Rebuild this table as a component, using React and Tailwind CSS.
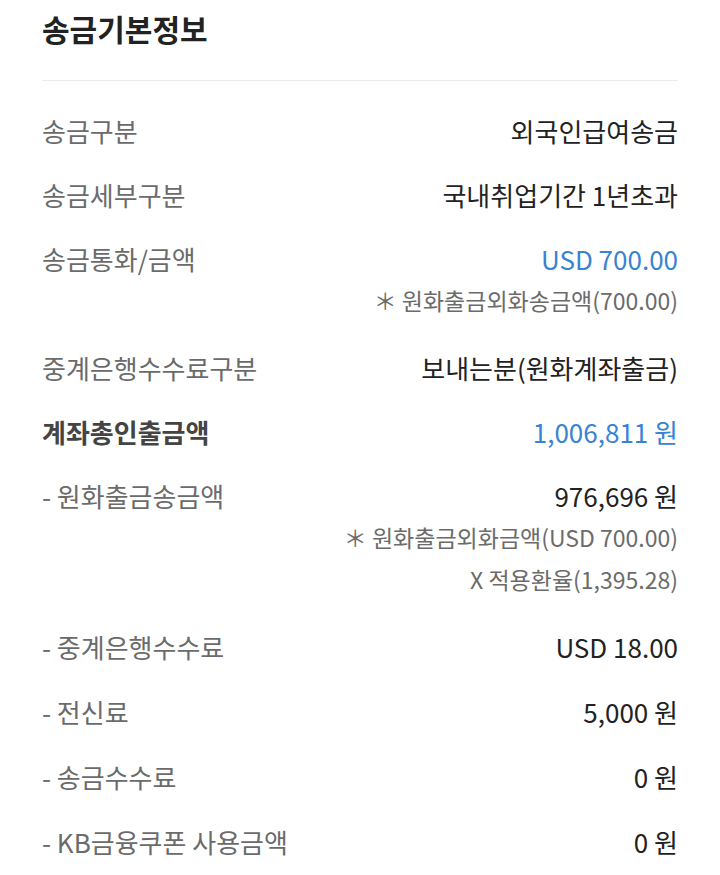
import React from 'react';

const rows = [
  { label: '송금구분', value: '외국인급여송금' },
  { label: '송금세부구분', value: '국내취업기간 1년초과' },
  {
    label: '송금통화/금액',
    value: 'USD 700.00',
    blue: true,
    notes: ['＊ 원화출금외화송금액(700.00)'],
  },
  { label: '중계은행수수료구분', value: '보내는분(원화계좌출금)' },
  { label: '계좌총인출금액', value: '1,006,811 원', blue: true, strong: true },
  {
    label: '- 원화출금송금액',
    value: '976,696 원',
    notes: ['＊ 원화출금외화금액(USD 700.00)', 'X 적용환율(1,395.28)'],
  },
  { label: '- 중계은행수수료', value: 'USD 18.00' },
  { label: '- 전신료', value: '5,000 원', loose: true },
  { label: '- 송금수수료', value: '0 원', loose: true },
  { label: '- KB금융쿠폰 사용금액', value: '0 원', loose: true },
];

function InfoRow({ row }) {
  const pad = row.notes ? 'pt-4 pb-[15px]' : row.loose ? 'pt-[17px] pb-4' : 'py-4';
  return (
    <div className={pad}>
      <div className="flex justify-between items-center leading-[32px] text-[26px]">
        <span className={row.strong ? 'font-bold text-[#444]' : 'text-[#6b6b6b]'}>{row.label}</span>
        <span className={row.blue ? 'text-[#3a82d2]' : 'text-[#222]'}>{row.value}</span>
      </div>
      {row.notes && (
        <div className="mt-[4px] flex flex-col items-end text-[23px] leading-[42px] text-[#6b6b6b]">
          {row.notes.map((n, idx) => (
            <span key={idx}>{n}</span>
          ))}
        </div>
      )}
    </div>
  );
}

export default function App() {
  return (
    <div
      className="w-[720px] min-h-[875px] bg-white px-[42px]"
      style={{ fontFamily: '"Noto Sans CJK KR", "Noto Sans", sans-serif' }}
    >
      <div className="pt-2 pb-8 border-b border-[#ebebeb]">
        <h1 className="text-[30px] leading-[40px] font-bold text-[#222]">송금기본정보</h1>
      </div>
      <div className="pt-[18px]">
        {rows.map((row, idx) => (
          <InfoRow key={idx} row={row} />
        ))}
      </div>
    </div>
  );
}
